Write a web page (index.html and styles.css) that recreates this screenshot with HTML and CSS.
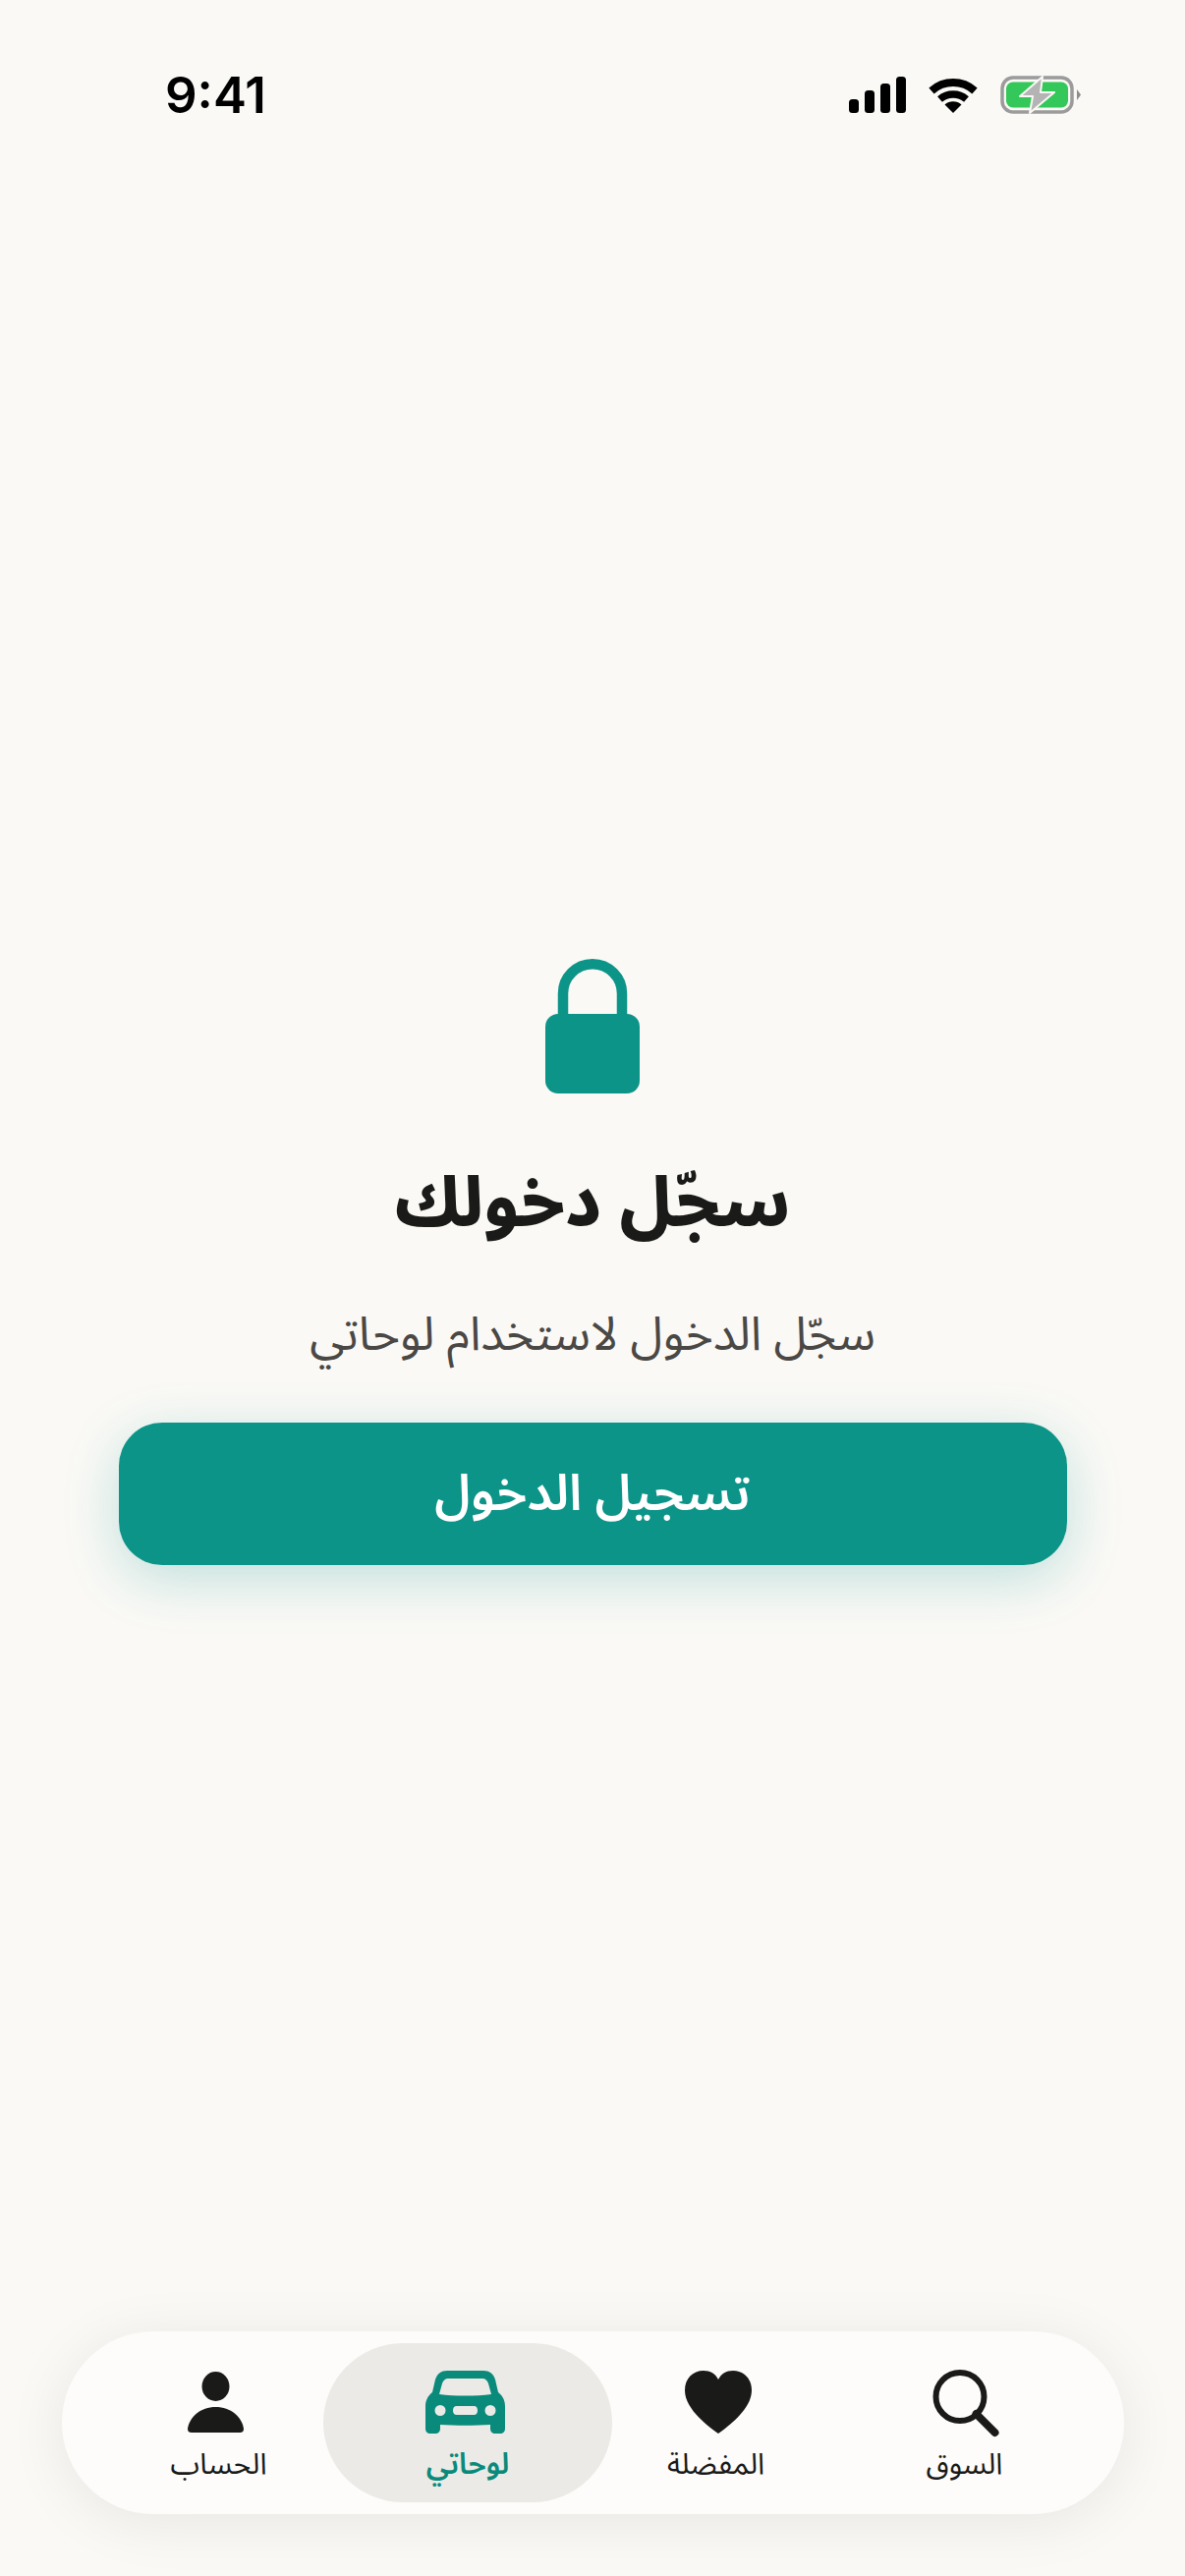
FILE: index.html
```html
<!DOCTYPE html>
<html lang="ar" dir="rtl">
  <head>
    <meta charset="UTF-8" />
    <meta name="viewport" content="width=device-width, initial-scale=1.0" />
    <title>لوحاتي</title>
    <link rel="stylesheet" href="styles.css">
  </head>
  <body>
    <div class="status-bar" dir="ltr">
      <span class="status-time">9:41</span>
      <div class="status-icons">
        <svg width="58" height="37" viewBox="0 0 58 37" fill="#000">
          <rect x="0" y="23" width="10" height="14" rx="3.5" />
          <rect x="16" y="14" width="10" height="23" rx="3.5" />
          <rect x="32" y="7" width="10" height="30" rx="3.5" />
          <rect x="48" y="0" width="10" height="37" rx="3.5" />
        </svg>
        <svg width="50" height="37" viewBox="0 0 50 37">
          <path d="M3 14.5 A33 33 0 0 1 47 14.5" fill="none" stroke="#000" stroke-width="8" />
          <path d="M11.5 23 A21 21 0 0 1 38.5 23" fill="none" stroke="#000" stroke-width="7.5" />
          <path d="M25 37 L16.5 28.5 A13 13 0 0 1 33.5 28.5 Z" fill="#000" />
        </svg>
        <svg width="82" height="39" viewBox="0 0 82 39">
          <rect x="2" y="2" width="71" height="35" rx="11" fill="none" stroke="#9b9b9b" stroke-width="3.5" />
          <rect x="6" y="6.5" width="63" height="26" rx="7" fill="#34c759" />
          <path d="M78 14 L82 19.5 L78 25 Z" fill="#8c8c8c" />
          <path d="M43 1 L20 21 H33 L30 38 L55 17 H41 Z" fill="#b4b4b4" stroke="#faf9f6" stroke-width="2" stroke-linejoin="round" />
        </svg>
      </div>
    </div>

    <main class="login-prompt">
      <svg class="lock-icon" width="96" height="137" viewBox="0 0 96 137">
        <path d="M18 60 V35.25 A30 30 0 0 1 78 35.25 V60" fill="none" stroke="#0d9488" stroke-width="10.5" />
        <rect x="0" y="56" width="96" height="81" rx="13" fill="#0d9488" />
      </svg>
      <h1 class="login-title">سجّل دخولك</h1>
      <p class="login-text">سجّل الدخول لاستخدام لوحاتي</p>
      <button class="login-btn">تسجيل الدخول</button>
    </main>

    <nav class="tab-bar">
      <a class="tab">
        <div class="tab-icon">
          <svg width="67" height="67" viewBox="-1.5 0 67 67" fill="none" stroke="#1a1a18">
            <circle cx="27.5" cy="27.5" r="24.5" stroke-width="6" />
            <path d="M44 45 L63 64" stroke-width="8" stroke-linecap="round" />
          </svg>
        </div>
        <span>السوق</span>
      </a>
      <a class="tab">
        <div class="tab-icon">
          <svg width="68" height="64" viewBox="-2 0 68 64" fill="#1a1a18">
            <path d="M34 64 C26 58 0 40 0 20 C0 8 8 0 19 0 C26 0 31 3 34 9 C37 3 42 0 49 0 C60 0 68 8 68 20 C68 40 42 58 34 64 Z" />
          </svg>
        </div>
        <span>المفضلة</span>
      </a>
      <a class="tab tab-active">
        <div class="tab-icon">
          <svg width="81" height="64" viewBox="3 0 81 64">
            <path fill-rule="evenodd" fill="#0a8a7a" d="M22 0 H59 C65 0 69 3 71 9 L74 22 C79 26 81 31 81 36 V59 C81 62 79 64 76 64 H71 C68 64 66 62 66 59 V55 C50 56 31 56 15 55 V59 C15 62 13 64 10 64 H5 C2 64 0 62 0 59 V36 C0 31 2 26 7 22 L10 9 C12 3 16 0 22 0 Z M23 8 C20 8 18 10 17 13 L14 24 C30 26 51 26 67 24 L64 13 C63 10 61 8 58 8 Z M15 35 A5.5 5.5 0 1 0 15 46 A5.5 5.5 0 1 0 15 35 Z M66 35 A5.5 5.5 0 1 0 66 46 A5.5 5.5 0 1 0 66 35 Z M32 36 C29 36 28 38 28 40.5 C28 43 29 45 32 45 H49 C52 45 53 43 53 40.5 C53 38 52 36 49 36 Z" />
          </svg>
        </div>
        <span>لوحاتي</span>
      </a>
      <a class="tab">
        <div class="tab-icon">
          <svg width="57" height="62" viewBox="3 0 57 62" fill="#1a1a18">
            <ellipse cx="28.5" cy="15" rx="14" ry="15" />
            <path d="M28.5 36 C13 36 2 46 0 58 C0 60.5 1 62 4 62 H53 C56 62 57 60.5 57 58 C55 46 44 36 28.5 36 Z" />
          </svg>
        </div>
        <span>الحساب</span>
      </a>
    </nav>
  </body>
</html>
```

FILE: styles.css
```css
* {
  box-sizing: border-box;
}
html,
body {
  height: 100%;
}
body {
  margin: 0;
  display: flex;
  flex-direction: column;
  background-color: #faf9f6;
  color: #1a1a18;
  font-family: "Noto Sans Arabic", "DejaVu Sans", sans-serif;
}
.status-bar {
  display: flex;
  justify-content: space-between;
  align-items: center;
  height: 140px;
  padding: 52px 106px 0 168px;
}
.status-time {
  font-family: Inter, "Liberation Sans", sans-serif;
  font-size: 51px;
  font-weight: 600;
  line-height: 1;
  color: #000;
}
.status-icons {
  display: flex;
  align-items: center;
  gap: 23px;
}
.login-prompt {
  flex: 1;
  display: flex;
  flex-direction: column;
  align-items: center;
  justify-content: center;
  padding-top: 56px;
}
.lock-icon {
  display: block;
}
.login-title {
  margin: 64px 0 0;
  font-size: 70px;
  font-weight: 800;
  line-height: 98px;
}
.login-text {
  margin: 52px 0 0;
  font-size: 48px;
  font-weight: 400;
  line-height: 64px;
  color: #4a4845;
}
.login-btn {
  width: 965px;
  height: 145px;
  margin-top: 57px;
  border: none;
  border-radius: 44px;
  background-color: #0d9488;
  box-shadow: 0 14px 56px rgba(13, 148, 136, 0.24);
  color: #fff;
  font-family: inherit;
  font-size: 51px;
  font-weight: 600;
}
.tab-bar {
  display: grid;
  grid-template-columns: repeat(4, 253px);
  align-items: stretch;
  height: 186px;
  margin: 0 62px 63px 63px;
  padding: 12px 36px 12px 33px;
  border-radius: 93px;
  background-color: #fdfcfa;
  box-shadow: 0 8px 60px rgba(0, 0, 0, 0.08);
}
.tab {
  display: flex;
  flex-direction: column;
  align-items: center;
  gap: 11px;
  padding-top: 28px;
  font-size: 30px;
  line-height: 42px;
}
.tab-icon {
  display: flex;
  align-items: center;
  justify-content: center;
  height: 64px;
}
.tab-icon svg {
  overflow: visible;
}
.tab-active {
  margin: 0 -21px 0 -20px;
  border-radius: 81px;
  background-color: #ebeae7;
  color: #0a8a7a;
  font-weight: 600;
}
```
